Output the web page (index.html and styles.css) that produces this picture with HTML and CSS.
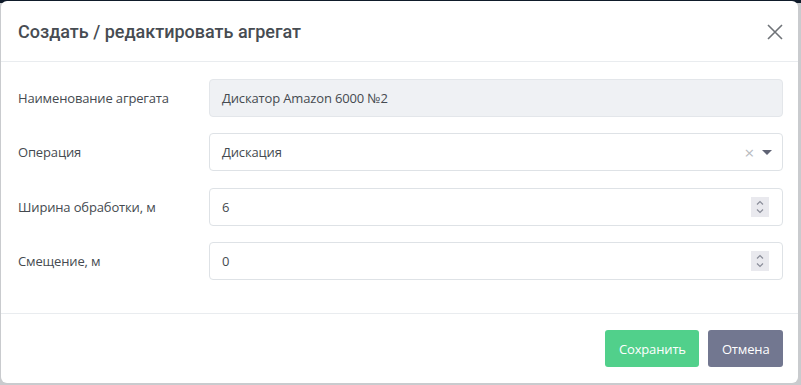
FILE: index.html
```html
<!DOCTYPE html>
<html lang="ru">
<head>
    <meta charset="UTF-8">
    <title>Агрегат</title>
    <link rel="stylesheet" href="styles.css">
</head>
<body>
    <div class="modal">
        <div class="modal-header">
            <h5 class="modal-title">Создать / редактировать агрегат</h5>
            <a href="javascript:;" class="close-btn">
                <svg width="18" height="18" viewBox="0 0 18 18">
                    <path d="M2 2L16 16M16 2L2 16" stroke="#6f7378" stroke-width="1.6" fill="none"/>
                </svg>
            </a>
        </div>
        <div class="modal-body">
            <div class="form-row">
                <label>Наименование агрегата</label>
                <div class="field field-disabled">Дискатор Amazon 6000 №2</div>
            </div>
            <div class="form-row">
                <label>Операция</label>
                <div class="field">
                    <span class="field-value">Дискация</span>
                    <span class="select-clear">×</span>
                    <span class="select-caret"></span>
                </div>
            </div>
            <div class="form-row">
                <label>Ширина обработки, м</label>
                <div class="field">
                    <span class="field-value">6</span>
                    <span class="spinner">
                        <svg width="18" height="20" viewBox="0 0 18 20">
                            <path d="M6 7.5L9 4.5L12 7.5M6 12.5L9 15.5L12 12.5" stroke="#8a8d99" stroke-width="1.2" fill="none"/>
                        </svg>
                    </span>
                </div>
            </div>
            <div class="form-row">
                <label>Смещение, м</label>
                <div class="field">
                    <span class="field-value">0</span>
                    <span class="spinner">
                        <svg width="18" height="20" viewBox="0 0 18 20">
                            <path d="M6 7.5L9 4.5L12 7.5M6 12.5L9 15.5L12 12.5" stroke="#8a8d99" stroke-width="1.2" fill="none"/>
                        </svg>
                    </span>
                </div>
            </div>
        </div>
        <div class="modal-footer">
            <a href="javascript:;" class="btn btn-save">Сохранить</a>
            <a href="javascript:;" class="btn btn-cancel">Отмена</a>
        </div>
    </div>
</body>
</html>
```

FILE: styles.css
```css
* {
    margin: 0;
    padding: 0;
    box-sizing: border-box;
}

body {
    width: 801px;
    height: 385px;
    background: linear-gradient(#0f1b2a 0, #0f1b2a 3px, #c9cbce 3px);
    font-family: "Open Sans", "Noto Sans", sans-serif;
    color: #495057;
    overflow: hidden;
}

a {
    text-decoration: none;
}

.modal {
    width: 797px;
    height: 382px;
    margin: 1px 3px 0 1px;
    background-color: #fff;
    border-radius: 6px;
    display: flex;
    flex-direction: column;
}

.modal-header {
    height: 61px;
    padding: 0 14px 0 17px;
    display: flex;
    align-items: center;
    justify-content: space-between;
    border-bottom: 1px solid #e9ecef;
}

.modal-title {
    font-family: Roboto, "Noto Sans", sans-serif;
    font-size: 18px;
    font-weight: 500;
    color: #474c52;
    padding-top: 1px;
}

.close-btn {
    display: flex;
    padding-top: 2px;
}

.modal-body {
    flex: 1;
    padding: 17px 15px 0 17px;
    display: flex;
    flex-direction: column;
    gap: 16.4px;
}

.form-row {
    display: flex;
    align-items: center;
}

.form-row label {
    width: 191px;
    font-size: 13px;
    letter-spacing: -0.15px;
    color: #454a50;
}

.field {
    flex: 1;
    height: 38px;
    border: 1px solid #dee2e6;
    border-radius: 4px;
    padding: 0 12px;
    display: flex;
    align-items: center;
    font-size: 13px;
    letter-spacing: -0.15px;
    color: #454a50;
}

.field-disabled {
    background-color: #eff1f4;
    border-color: #e3e6ea;
}

.field-value {
    flex: 1;
}

.select-clear {
    color: #b8bbbf;
    font-size: 17px;
    margin-right: 8px;
    line-height: 1;
}

.select-caret {
    width: 0;
    height: 0;
    border-left: 5px solid transparent;
    border-right: 5px solid transparent;
    border-top: 5px solid #5f6374;
    margin-right: -2px;
}

.spinner {
    display: flex;
    background-color: #e9e9ee;
    margin-right: 1px;
}

.modal-footer {
    height: 70px;
    border-top: 1px solid #e9ecef;
    display: flex;
    justify-content: flex-end;
    align-items: flex-start;
    padding: 16px 15px 0 0;
    gap: 9px;
}

.btn {
    height: 37px;
    padding: 0 13.5px;
    border-radius: 3px;
    display: flex;
    align-items: center;
    font-size: 13px;
    letter-spacing: -0.15px;
    color: #fff;
}

.btn-save {
    background-color: #51d08b;
}

.btn-cancel {
    background-color: #727790;
}
```
